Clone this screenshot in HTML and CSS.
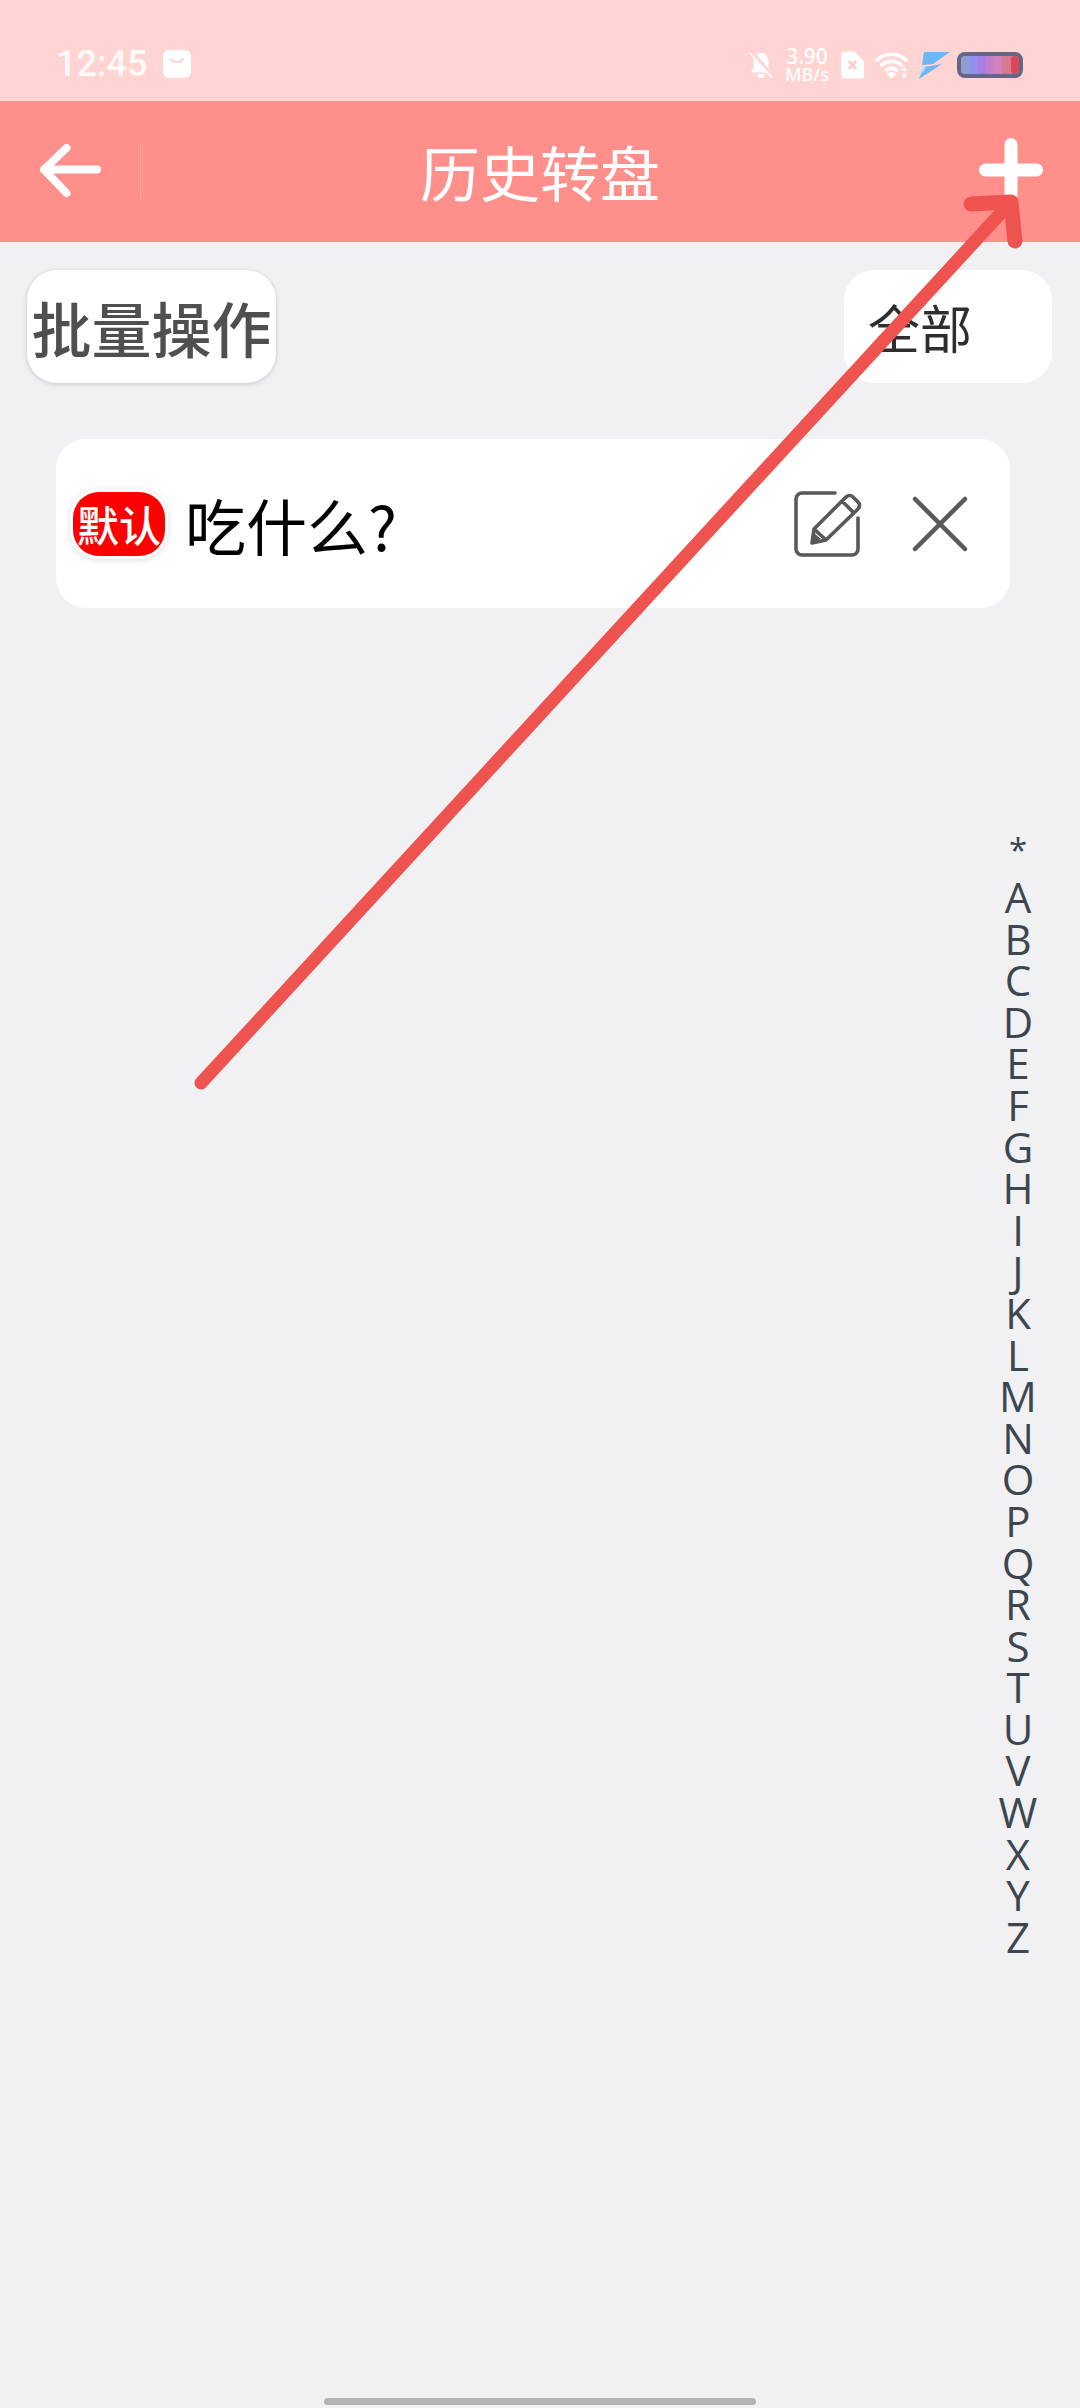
FILE: index.html
```html
<!DOCTYPE html>
<html lang="zh">
<head>
<meta charset="utf-8">
<title>历史转盘</title>
<link rel="stylesheet" href="styles.css">
</head>
<body>
<div class="screen">
  <div class="statusbar">
    <div class="status-left">
      <span class="time">12:45</span>
      <svg class="bag" viewBox="0 0 28 28"><rect x="0" y="0" width="28" height="28" rx="6" fill="#fff"/><path d="M8 9c2 4 10 4 12 0" fill="none" stroke="#ffd4d2" stroke-width="2.2" stroke-linecap="round"/></svg>
    </div>
    <div class="status-right">
      <svg class="ic-bell" viewBox="0 0 26 30"><path d="M13 2c5 0 8 4 8 9v7l3 5H2l3-5v-7c0-5 3-9 8-9z M9 25h8a4 4 0 0 1-8 0z" fill="#fff"/><path d="M2 0l24 28" stroke="#ffd4d2" stroke-width="4"/><path d="M1 2l24 27" stroke="#fff" stroke-width="2"/></svg>
      <div class="speed"><span>3.90</span><span class="speed-unit">MB/s</span></div>
      <svg class="ic-sim" viewBox="0 0 24 28"><path d="M3 0h11l10 10v15a3 3 0 0 1-3 3H3a3 3 0 0 1-3-3V3a3 3 0 0 1 3-3z" fill="#fff"/><path d="M8 10l8 8M16 10l-8 8" stroke="#ffc9c6" stroke-width="2.6"/></svg>
      <svg class="ic-wifi" viewBox="0 0 34 28"><path d="M2 9c9-8 21-8 30 0M7 14c6-5 14-5 20 0M12 19c3-2.500 7-2.500 10 0" fill="none" stroke="#fff" stroke-width="3.600" stroke-linecap="round"/><path d="M12 23l5-2 5 2-5 5z" fill="#fff"/><path d="M30 15l3 5h-6zM30 28l3-5h-6z" fill="#fff"/></svg>
      <svg class="ic-bolt" viewBox="0 0 32 27"><path d="M6 0h26L15 12 4 13z" fill="#6cb8f6"/><path d="M24 12L1 27l4-12 8-1z" fill="#6cb8f6"/><path d="M5 14L1 25l7-9z" fill="#b5dcfb"/></svg>
      <div class="battery">
        <span class="cell c1"></span><span class="cell c2"></span><span class="cell c3"></span><span class="cell c4"></span><span class="cell c5"></span><span class="cell c6"></span><span class="cell c7"></span>
      </div>
    </div>
  </div>

  <header class="appbar">
    <div class="appbar-left">
      <svg class="ic-back" viewBox="0 0 64 56"><path d="M59 26H5M28 4L5 26l23 24" fill="none" stroke="#fff" stroke-width="8" stroke-linecap="round" stroke-linejoin="round"/></svg>
      <span class="divider"></span>
    </div>
    <h1 class="title">历史转盘</h1>
    <svg class="ic-plus" viewBox="0 0 64 64"><path d="M32 6.500v51M6.500 32h51" stroke="#fff" stroke-width="13" stroke-linecap="round"/></svg>
  </header>

  <div class="toolbar">
    <button class="btn btn-batch">批量操作</button>
    <button class="btn btn-filter">全部</button>
  </div>

  <div class="card">
    <span class="badge">默认</span>
    <span class="name">吃什么?</span>
    <svg class="ic-edit" viewBox="0 0 68 66"><path d="M41 2H8a6 6 0 0 0-6 6v50a6 6 0 0 0 6 6h50a6 6 0 0 0 6-6V27" fill="none" stroke="#595959" stroke-width="3.600" stroke-linecap="round"/><path d="M20 38L52 6q4-3 7 0l5 5q3 3 0 7L32 49l-14 3z M20 38l12 11 M48 10l12 12" fill="none" stroke="#595959" stroke-width="3.600" stroke-linejoin="round"/><path d="M18 52l2-10 7 6z" fill="#595959"/></svg>
    <svg class="ic-close" viewBox="0 0 56 56"><path d="M3 3l50 50M53 3L3 53" stroke="#595959" stroke-width="4.500" stroke-linecap="round"/></svg>
  </div>

  <ul class="index">
    <li class="star">*</li><li>A</li><li>B</li><li>C</li><li>D</li><li>E</li><li>F</li><li>G</li><li>H</li><li>I</li><li>J</li><li>K</li><li>L</li><li>M</li><li>N</li><li>O</li><li>P</li><li>Q</li><li>R</li><li>S</li><li>T</li><li>U</li><li>V</li><li>W</li><li>X</li><li>Y</li><li>Z</li>
  </ul>

  <svg class="annotation" viewBox="0 0 1080 2408"><path d="M201 1083L1011 202" fill="none" stroke="#ef5350" stroke-width="13" stroke-linecap="round"/><path d="M971 204L1011 202L1015 241" fill="none" stroke="#ef5350" stroke-width="15" stroke-linecap="round" stroke-linejoin="round"/></svg>

  <div class="homebar"></div>
</div>
</body>
</html>
```
FILE: styles.css
```css
* { box-sizing: border-box; }
html, body { margin: 0; padding: 0; }
body { font-family: "Noto Sans CJK SC", "Noto Sans", sans-serif; background: #f1f1f4; }
.screen { position: relative; width: 1080px; height: 2408px; overflow: hidden; background: #f1f1f4; }

.statusbar { height: 101px; background: #ffd4d2; display: flex; justify-content: space-between; align-items: flex-start; padding: 48px 57px 0 56px; }
.status-left { display: flex; align-items: center; gap: 16px; height: 32px; }
.time { font-family: Roboto, sans-serif; font-size: 36px; line-height: 32px; font-weight: 500; color: #fff; opacity: .9; }
.bag { width: 28px; height: 28px; }
.status-right { display: flex; align-items: center; height: 34px; }
.ic-bell { width: 24px; height: 28px; margin-right: 11px; }
.speed { display: flex; flex-direction: column; align-items: center; width: 46px; color: #fff; font-family: "Noto Sans", sans-serif; font-size: 21px; line-height: 19px; font-weight: 500; margin-right: 11px; }
.speed-unit { font-size: 18px; line-height: 17px; }
.ic-sim { width: 23px; height: 28px; margin-right: 11px; }
.ic-wifi { width: 33px; height: 28px; margin-right: 10px; }
.ic-bolt { width: 32px; height: 27px; margin-right: 7px; }
.battery { width: 66px; height: 26px; border: 4px solid #646686; border-radius: 8px; background: #c77; display: flex; overflow: hidden; }
.cell { flex: 1; }
.c1 { background: #8f9fd0; } .c2 { background: #9490f0; } .c3 { background: #a77fdc; } .c4 { background: #c47fcb; } .c5 { background: #d680bb; } .c6 { background: #d67a92; } .c7 { background: #e0445a; border-radius: 4px; }

.appbar { position: relative; height: 141px; background: #ff8f8b; display: flex; align-items: center; justify-content: space-between; padding: 0 37px 0 39px; }
.appbar-left { display: flex; align-items: center; }
.ic-back { width: 63px; height: 55px; }
.divider { width: 1px; height: 55px; margin-left: 38px; background: #ffa5a1; }
.title { position: absolute; left: 0; right: 0; top: 0; bottom: 2px; margin: 0; display: flex; align-items: center; justify-content: center; font-size: 60px; font-weight: 400; color: #fff; }
.ic-plus { width: 64px; height: 64px; position: relative; top: -2px; }

.toolbar { display: flex; justify-content: space-between; padding: 28px 28px 0 27px; }
.btn { height: 113px; border: 0; background: #fff; border-radius: 30px; font-family: inherit; padding: 0; white-space: nowrap; }
.btn-batch { width: 249px; font-size: 60px; font-weight: 500; color: #4f4f4f; box-shadow: 0 1px 5px rgba(0,0,0,.18); }
.btn-filter { width: 208px; font-size: 52px; color: #2e2e2e; text-align: left; padding-left: 24px; }

.card { margin: 56px 70px 0 56px; height: 169px; background: #fff; border-radius: 30px; display: flex; align-items: center; padding-left: 17px; }
.badge { width: 92px; height: 64px; border-radius: 26px; background: #f00; color: #fff; font-size: 42px; font-weight: 500; line-height: 64px; text-align: center; white-space: nowrap; box-shadow: 0 0 0 3px #fff, 0 1px 6px 3px rgba(0,0,0,.14); }
.name { margin-left: 20px; font-size: 61px; color: #000; flex: 1; white-space: nowrap; position: relative; top: 1px; }
.ic-edit { width: 68px; height: 66px; }
.ic-close { width: 56px; height: 56px; margin-left: 50px; margin-right: 42px; }

.index { position: absolute; top: 824px; right: 0; margin: 0; padding: 0; list-style: none; display: flex; flex-direction: column; align-items: center; width: 124px; pointer-events: none; }
.index li { width: 124px; text-align: center; height: 41.6px; line-height: 41.6px; font-family: "Open Sans", sans-serif; font-size: 42px; color: #3c4650; }
.index .star { height: 52px; line-height: 52px; font-size: 33px; }

.annotation { position: absolute; left: 0; top: 0; width: 1080px; height: 2408px; pointer-events: none; }
.homebar { position: absolute; left: 324px; bottom: 3px; width: 432px; height: 7px; border-radius: 4px; background: #b4b4b6; }
```
